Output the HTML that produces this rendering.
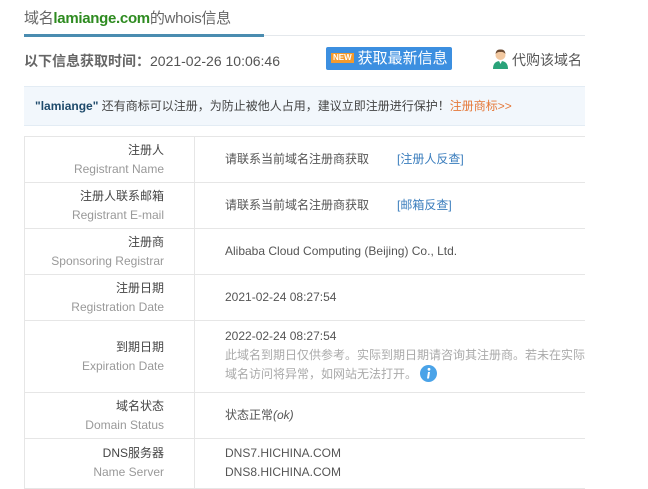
<!DOCTYPE html>
<html><head><meta charset="utf-8"><style>
*{margin:0;padding:0;box-sizing:border-box}
body{width:648px;height:488px;background:#fff;font-family:"Liberation Sans","Noto Sans CJK SC",sans-serif;color:#333;position:relative;overflow:hidden}
.a{position:absolute;white-space:nowrap}
.title{left:24px;top:7px;font-size:15px;color:#666;letter-spacing:-0.3px}
.title b{color:#2e8b20}
.hl{left:24px;top:34px;width:240px;height:3px;background:#4a8cb0}
.gl{left:264px;top:35px;width:321px;height:1px;background:#e4e8ec}
.info{left:24px;top:51px;font-size:14px;color:#555}
.info b{color:#666}
.btn{left:326px;top:47px;width:126px;height:23px;background:#3c8fe0;border-radius:2px;color:#fff;font-size:15px;line-height:23px;padding-left:5px}
.btn i{font-style:normal;display:inline-block;background:#f39a2d;color:#fff;font-size:8px;font-weight:bold;line-height:10px;padding:0 2px;vertical-align:3px;margin-right:4px}
.buy{left:512px;top:50px;font-size:14px;color:#555}
.ban{left:24px;top:86px;width:561px;height:40px;background:#f2f7fc;border-top:1px solid #e3ecf4;border-bottom:1px solid #e3ecf4;font-size:12px;color:#444;line-height:38px;padding-left:11px}
.ban b{color:#1e4a6b}
.ban span{color:#e5793a}
.tbl{left:24px;top:136px;width:561px;border-top:1px solid #e6e6e6;border-left:1px solid #e6e6e6}
.row{position:relative;border-bottom:1px solid #e6e6e6}
.l{position:absolute;left:0;top:0;width:170px;height:100%;border-right:1px solid #e6e6e6;text-align:right;padding-right:30px;font-size:12px;line-height:19px}
.l .c{color:#444}.l .e{color:#999}
.v{position:absolute;left:200px;font-size:12px;color:#555;line-height:19px}
.lk{color:#3a7dbd;margin-left:28px}
.g{color:#aaa}
</style></head><body>
<div class="a title">域名<b>lamiange.com</b>的whois信息</div>
<div class="a hl"></div><div class="a gl"></div>
<div class="a info"><b>以下信息获取时间：</b>2021-02-26 10:06:46</div>
<div class="a btn"><i>NEW</i>获取最新信息</div>
<div class="a" style="left:492px;top:49px;width:17px;height:20px">
<svg width="17" height="20" viewBox="0 0 17 20"><circle cx="8.5" cy="6" r="5" fill="#f2c8a0"/><path d="M3.5 5 Q4 0 8.5 0.5 Q13 0 13.5 5 Q11 2.5 8.5 3 Q6 2.5 3.5 5Z" fill="#6b4a32"/><path d="M1 20 Q1 12 8.5 12 Q16 12 16 20Z" fill="#2aa37a"/><path d="M7 12 L8.5 15 L10 12Z" fill="#fff"/></svg></div>
<div class="a buy">代购该域名</div>
<div class="a ban"><b>"lamiange"</b> 还有商标可以注册，为防止被他人占用，建议立即注册进行保护！<span>注册商标&gt;&gt;</span></div>
<div class="a tbl">
<div class="row" style="height:46px"><div class="l" style="padding-top:4px"><div class="c">注册人</div><div class="e">Registrant Name</div></div><div class="v" style="top:13px">请联系当前域名注册商获取<span class="lk">[注册人反查]</span></div></div>
<div class="row" style="height:46px"><div class="l" style="padding-top:4px"><div class="c">注册人联系邮箱</div><div class="e">Registrant E-mail</div></div><div class="v" style="top:13px">请联系当前域名注册商获取<span class="lk">[邮箱反查]</span></div></div>
<div class="row" style="height:46px"><div class="l" style="padding-top:4px"><div class="c">注册商</div><div class="e">Sponsoring Registrar</div></div><div class="v" style="top:13px">Alibaba Cloud Computing (Beijing) Co., Ltd.</div></div>
<div class="row" style="height:46px"><div class="l" style="padding-top:4px"><div class="c">注册日期</div><div class="e">Registration Date</div></div><div class="v" style="top:13px">2021-02-24 08:27:54</div></div>
<div class="row" style="height:72px"><div class="l" style="padding-top:17px"><div class="c">到期日期</div><div class="e">Expiration Date</div></div><div class="v" style="top:6px">2022-02-24 08:27:54<br><span class="g">此域名到期日仅供参考。实际到期日期请咨询其注册商。若未在实际</span><br><span class="g">域名访问将异常，如网站无法打开。</span><svg width="17" height="17" viewBox="0 0 17 17" style="vertical-align:-4px;margin-left:3px"><circle cx="8.5" cy="8.5" r="8.5" fill="#4aa3e8"/><circle cx="9" cy="4.3" r="1.4" fill="#fff"/><path d="M8 7 L10 7 L9 13.5 L7 13.5Z" fill="#fff"/></svg></div></div>
<div class="row" style="height:46px"><div class="l" style="padding-top:4px"><div class="c">域名状态</div><div class="e">Domain Status</div></div><div class="v" style="top:13px">状态正常<i>(ok)</i></div></div>
<div class="row" style="height:50px"><div class="l" style="padding-top:5px"><div class="c">DNS服务器</div><div class="e">Name Server</div></div><div class="v" style="top:5px">DNS7.HICHINA.COM<br>DNS8.HICHINA.COM</div></div>
</div>
</body></html>
